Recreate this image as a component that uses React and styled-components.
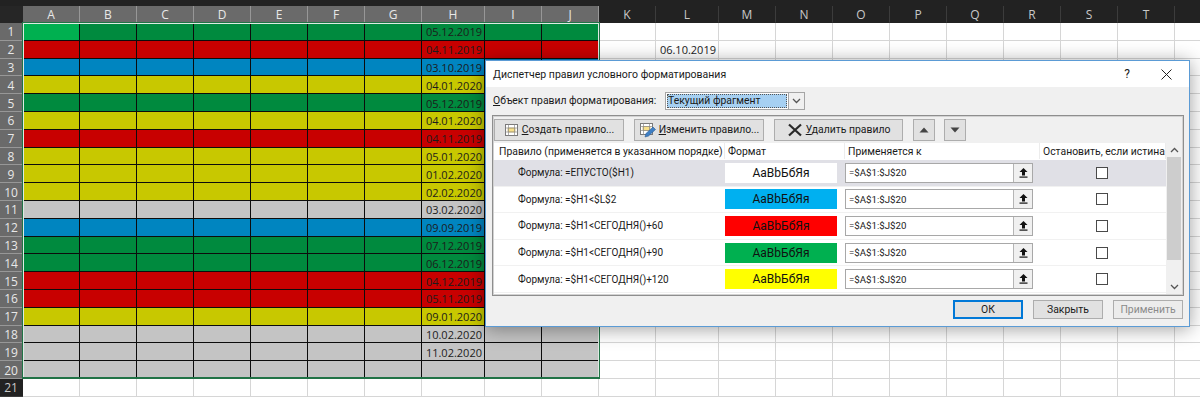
import React from 'react';
import styled, { createGlobalStyle } from 'styled-components';

const COLORS = {
  green: '#008a3e',
  red: '#c80000',
  blue: '#0085c0',
  yellow: '#c8c800',
  gray: '#c4c4c4',
};

const COLUMNS = 'ABCDEFGHIJKLMNOPQRSTU'.split('');
const LABELS = 'ABCDEFGHIJKLMNOPQRST'.split('');

const SHEET_ROWS = [
  ['green', '05.12.2019'],
  ['red', '04.11.2019'],
  ['blue', '03.10.2019'],
  ['yellow', '04.01.2020'],
  ['green', '05.12.2019'],
  ['yellow', '04.01.2020'],
  ['red', '04.11.2019'],
  ['yellow', '05.01.2020'],
  ['yellow', '01.02.2020'],
  ['yellow', '02.02.2020'],
  ['gray', '03.02.2020'],
  ['blue', '09.09.2019'],
  ['green', '07.12.2019'],
  ['green', '06.12.2019'],
  ['red', '04.12.2019'],
  ['red', '05.11.2019'],
  ['yellow', '09.01.2020'],
  ['gray', '10.02.2020'],
  ['gray', '11.02.2020'],
  ['gray', ''],
];

const RULES = [
  { formula: 'Формула: =ЕПУСТО($H1)', swatch: '#ffffff', active: true },
  { formula: 'Формула: =$H1<$L$2', swatch: '#00b0f0' },
  { formula: 'Формула: =$H1<СЕГОДНЯ()+60', swatch: '#ff0000' },
  { formula: 'Формула: =$H1<СЕГОДНЯ()+90', swatch: '#00b050' },
  { formula: 'Формула: =$H1<СЕГОДНЯ()+120', swatch: '#ffff00' },
];

const GlobalStyle = createGlobalStyle`
  html, body {
    margin: 0;
    padding: 0;
    background: #fff;
    overflow: hidden;
  }

  * {
    box-sizing: border-box;
  }
`;

const Page = styled.div`
  position: relative;
  width: 1200px;
  height: 402px;
  overflow: hidden;
  background: #fff;
  font-family: 'Open Sans', 'Noto Sans', sans-serif;
`;

const TopStrip = styled.div`
  height: 6px;
  background: #222;
`;

const Sheet = styled.div`
  position: relative;
  display: grid;
  grid-template-columns: 23px repeat(7, 57px) 63px repeat(3, 57px) 63px repeat(9, 57px);
  grid-template-rows: 17px repeat(21, 17.8px);
`;

const Corner = styled.div`
  position: relative;
  background: #262626;

  ::after {
    content: '';
    position: absolute;
    right: 3px;
    bottom: 3px;
    border-style: solid;
    border-width: 0 0 11px 11px;
    border-color: transparent transparent #5c5c5c transparent;
  }
`;

const ColumnHeader = styled.div`
  display: flex;
  align-items: center;
  justify-content: center;
  font-size: 12px;
  color: ${(p) => (p.$selected ? '#e8e8e8' : '#c8c8c8')};
  background: ${(p) => (p.$selected ? '#6a6a6a' : '#222')};
  border-right: 1px solid ${(p) => (p.$selected ? '#979797' : '#3c3c3c')};
  border-bottom: 1px solid ${(p) => (p.$selected ? '#217346' : '#222')};
`;

const RowHeader = styled.div`
  display: flex;
  align-items: center;
  justify-content: center;
  padding: 1px 1px 0 0;
  font-size: 12px;
  color: ${(p) => (p.$selected ? '#e8e8e8' : '#c8c8c8')};
  background: ${(p) => (p.$selected ? '#6a6a6a' : '#222')};
  border-bottom: 1px solid ${(p) => (p.$selected ? '#979797' : '#3c3c3c')};
`;

const Cell = styled.div`
  display: flex;
  align-items: center;
  justify-content: flex-end;
  padding: 1px 2px 0 0;
  font-size: 11px;
  color: #1c1c1c;
  background: ${(p) => p.$fill || '#fff'};
  border-right: 1px solid ${(p) => (p.$fill ? '#0c0c0c' : '#d6d6d6')};
  border-bottom: 1px solid ${(p) => (p.$fill ? '#0c0c0c' : '#d6d6d6')};
`;

const ActiveCell = styled.div`
  position: absolute;
  left: 23px;
  top: 17px;
  width: 57px;
  height: 18px;
  background: #00b050;
  border-right: 1px solid #0c0c0c;
  border-bottom: 1px solid #0c0c0c;
`;

const Selection = styled.div`
  position: absolute;
  left: 22px;
  top: 16px;
  width: 578px;
  height: 357px;
  border-style: solid;
  border-color: #217346;
  border-width: 1px 1px 2px 1px;
  box-shadow: inset 0 1px 0 #dfe9e3, inset -1px 0 0 #dfe9e3, inset 1px 0 0 #dfe9e3;
  pointer-events: none;

  ::after {
    content: '';
    position: absolute;
    right: -3px;
    bottom: -4px;
    width: 5px;
    height: 5px;
    background: #217346;
  }
`;

const Dialog = styled.div`
  position: absolute;
  left: 485px;
  top: 60px;
  width: 705px;
  height: 267px;
  display: flex;
  flex-direction: column;
  color: #1a1a1a;
  background: #f0f0f0;
  border: 1px solid #5b9bd5;
  box-shadow: 0 2px 18px rgba(0, 0, 0, 0.38);
  font-family: Roboto, 'Open Sans', sans-serif;
  font-size: 10.4px;
`;

const TitleBar = styled.div`
  flex: none;
  height: 26px;
  display: flex;
  align-items: center;
  justify-content: space-between;
  padding: 0 17px 0 7px;
  background: #fff;
`;

const Title = styled.div`
  font-size: 10.5px;
`;

const WindowActions = styled.div`
  display: flex;
  align-items: center;
  gap: 31px;
`;

const HelpMark = styled.span`
  font-size: 12px;
`;

const TargetRow = styled.div`
  flex: none;
  height: 28px;
  display: flex;
  align-items: center;
  padding: 0 0 1px 7px;
`;

const TargetLabel = styled.label`
  flex: none;
  width: 172px;
  white-space: nowrap;
`;

const Combo = styled.div`
  display: flex;
  width: 140px;
  height: 18px;
  background: #fff;
  border: 1px solid #a5a5a5;
`;

const ComboValue = styled.div`
  flex: 1;
  display: flex;
  align-items: center;
  margin: 1px;
  padding-left: 1px;
  background: #a6d0f2;
  outline: 1px dotted #555;
  outline-offset: -1px;
`;

const ComboArrow = styled.div`
  flex: none;
  width: 16px;
  display: flex;
  align-items: center;
  justify-content: center;
  background: #f0f0f0;
  border-left: 1px solid #a5a5a5;
`;

const Frame = styled.div`
  flex: none;
  height: 181px;
  margin: 0 5px 0 6px;
  display: flex;
  flex-direction: column;
  border: 1px solid #8e8e8e;
  outline: 1px solid #d2d2d2;
  outline-offset: -2px;
`;

const Toolbar = styled.div`
  flex: none;
  height: 26px;
  display: flex;
  align-items: center;
  padding: 1px 0 0 1px;
`;

const ToolButton = styled.button`
  flex: none;
  width: ${(p) => p.$width || 130}px;
  height: 22px;
  margin-right: ${(p) => p.$gap || 10}px;
  padding: 0;
  display: flex;
  align-items: center;
  justify-content: center;
  gap: 3px;
  font: inherit;
  color: inherit;
  white-space: nowrap;
  background: #e1e1e1;
  border: 1px solid #adadad;
`;

const Hotkey = styled.span`
  text-decoration: underline;
`;

const RuleList = styled.div`
  flex: 1;
  min-height: 0;
  display: flex;
  margin: 1px;
  background: #fff;
`;

const RuleColumns = styled.div`
  flex: 1;
  min-width: 0;
`;

const RuleHeader = styled.div`
  height: 17px;
  display: grid;
  grid-template-columns: 231px 120px 195px 1fr;
  align-items: center;
  padding-bottom: 1px;
`;

const HeaderCell = styled.div`
  height: 100%;
  display: flex;
  align-items: center;
  padding-left: ${(p) => p.$pad || 3}px;
  white-space: nowrap;
  border-right: 1px solid #ececec;
`;

const RuleRow = styled.div`
  height: 26.6px;
  display: grid;
  grid-template-columns: 231px 120px 195px 1fr;
  align-items: center;
  background: ${(p) => (p.$active ? '#e0e0e6' : '#fff')};
  border-bottom: 1px solid #f1f1f1;
`;

const Formula = styled.div`
  padding-left: 24px;
  font-size: 10px;
  white-space: nowrap;
`;

const Swatch = styled.div`
  width: 112px;
  height: 20px;
  display: flex;
  align-items: center;
  justify-content: center;
  color: #111;
  font-size: 12px;
  background: ${(p) => p.$color};
`;

const RangeInput = styled.div`
  width: 188px;
  height: 20px;
  display: flex;
  align-items: stretch;
  background: #fff;
  border: 1px solid #a8a8a8;
`;

const RangeText = styled.div`
  flex: 1;
  display: flex;
  align-items: center;
  padding-left: 3px;
  font-size: 9.7px;
`;

const RangeButton = styled.div`
  flex: none;
  width: 19px;
  display: flex;
  align-items: center;
  justify-content: center;
  background: #f0f0f0;
  border-left: 1px solid #b5b5b5;
`;

const CheckBox = styled.div`
  justify-self: center;
  width: 12px;
  height: 12px;
  margin-right: 2px;
  background: #fff;
  border: 1px solid #4a4a4a;
`;

const Scrollbar = styled.div`
  flex: none;
  width: 16px;
  display: flex;
  flex-direction: column;
  background: #f0f0f0;
`;

const ScrollArrow = styled.div`
  flex: none;
  height: 14px;
  display: flex;
  align-items: center;
  justify-content: center;
`;

const ScrollThumb = styled.div`
  flex: none;
  height: 103px;
  margin: 0 1px;
  background: #cdcdcd;
`;

const ScrollTrack = styled.div`
  flex: 1;
`;

const Footer = styled.div`
  flex: 1;
  display: flex;
  align-items: center;
  justify-content: flex-end;
  gap: 10px;
  padding: 0 6px 3px 0;
`;

const DialogButton = styled.button`
  width: 70px;
  height: 19px;
  padding: 0;
  font: inherit;
  color: ${(p) => (p.disabled ? '#8a8a8a' : 'inherit')};
  background: ${(p) => (p.disabled ? '#ececec' : '#e1e1e1')};
  border: ${(p) => (p.$primary ? '2px solid #0078d7' : '1px solid #adadad')};
`;

const NewRuleIcon = () => (
  <svg width="15" height="14" viewBox="0 0 15 14">
    <rect x="1.5" y="1.5" width="12" height="11" fill="#fff" stroke="#7a7a7a" />
    <rect x="4" y="5" width="7" height="4" fill="#f7e08a" stroke="#c9a23a" strokeWidth="0.6" />
    <path d="M1.5 5H13.5M1.5 9H13.5M4.5 1.5V12.5M10.5 1.5V12.5" stroke="#8c8c8c" strokeWidth="0.7" fill="none" />
  </svg>
);

const EditRuleIcon = () => (
  <svg width="17" height="16" viewBox="0 0 17 16">
    <rect x="1.5" y="1.5" width="12" height="11" fill="#fff" stroke="#7a7a7a" />
    <rect x="4" y="4.5" width="7" height="4" fill="#f7e08a" stroke="#c9a23a" strokeWidth="0.6" />
    <path d="M1.5 4.5H13.5M1.5 8.5H13.5M4.5 1.5V12.5M10.5 1.5V12.5" stroke="#8c8c8c" strokeWidth="0.7" fill="none" />
    <path d="M6 15l1-3.5 7-6.5 2.5 2.5-7 6.5z" fill="#3f7fc4" stroke="#2a5c96" strokeWidth="0.6" />
  </svg>
);

const DeleteIcon = () => (
  <svg width="16" height="14" viewBox="0 0 16 14">
    <path d="M2 1.5L14 12.5M14 1.5L2 12.5" stroke="#2a2a2a" strokeWidth="2.2" fill="none" />
  </svg>
);

const Triangle = ({ down }) => (
  <svg width="10" height="6" viewBox="0 0 10 6">
    <path d={down ? 'M0.5 0.5H9.5L5 5.5z' : 'M0.5 5.5H9.5L5 0.5z'} fill="#444" />
  </svg>
);

const Chevron = ({ up, color = '#555' }) => (
  <svg width="9" height="6" viewBox="0 0 9 6">
    <path d={up ? 'M1 5L4.5 1.5L8 5' : 'M1 1L4.5 4.5L8 1'} stroke={color} strokeWidth="1.3" fill="none" />
  </svg>
);

const CloseIcon = () => (
  <svg width="11" height="11" viewBox="0 0 11 11">
    <path d="M0.5 0.5L10.5 10.5M10.5 0.5L0.5 10.5" stroke="#222" strokeWidth="1" fill="none" />
  </svg>
);

const CollapseIcon = () => (
  <svg width="9" height="10" viewBox="0 0 9 10">
    <path d="M4.5 0L8.5 4H6V7.5H3V4H0.5z" fill="#111" />
    <rect x="0.5" y="8.5" width="8" height="1.2" fill="#111" />
  </svg>
);

function SheetGrid() {
  return (
    <Sheet>
      <Corner />
      {COLUMNS.map((col, i) => (
        <ColumnHeader key={col} $selected={i < 10}>
          {LABELS[i]}
        </ColumnHeader>
      ))}

      {SHEET_ROWS.map(([color, date], r) => (
        <React.Fragment key={r}>
          <RowHeader $selected>{r + 1}</RowHeader>
          {COLUMNS.map((col, c) => {
            let text = '';
            if (col === 'H') text = date;
            if (col === 'L' && r === 1) text = '06.10.2019';
            return (
              <Cell key={col} $fill={c < 10 ? COLORS[color] : null}>
                {text}
              </Cell>
            );
          })}
        </React.Fragment>
      ))}

      <RowHeader>21</RowHeader>
      {COLUMNS.map((col) => (
        <Cell key={col} />
      ))}

      <ActiveCell />
      <Selection />
    </Sheet>
  );
}

function RulesDialog() {
  return (
    <Dialog>
      <TitleBar>
        <Title>Диспетчер правил условного форматирования</Title>
        <WindowActions>
          <HelpMark>?</HelpMark>
          <CloseIcon />
        </WindowActions>
      </TitleBar>

      <TargetRow>
        <TargetLabel>
          <Hotkey>О</Hotkey>бъект правил форматирования:
        </TargetLabel>
        <Combo>
          <ComboValue>Текущий фрагмент</ComboValue>
          <ComboArrow>
            <Chevron />
          </ComboArrow>
        </Combo>
      </TargetRow>

      <Frame>
        <Toolbar>
          <ToolButton>
            <NewRuleIcon />
            <span>
              <Hotkey>С</Hotkey>оздать правило...
            </span>
          </ToolButton>
          <ToolButton>
            <EditRuleIcon />
            <span>
              <Hotkey>И</Hotkey>зменить правило...
            </span>
          </ToolButton>
          <ToolButton $width={129}>
            <DeleteIcon />
            <span>
              <Hotkey>У</Hotkey>далить правило
            </span>
          </ToolButton>
          <ToolButton $width={22} $gap={9}>
            <Triangle />
          </ToolButton>
          <ToolButton $width={22}>
            <Triangle down />
          </ToolButton>
        </Toolbar>

        <RuleList>
          <RuleColumns>
            <RuleHeader>
              <HeaderCell $pad={5}>Правило (применяется в указанном порядке)</HeaderCell>
              <HeaderCell>Формат</HeaderCell>
              <HeaderCell>Применяется к</HeaderCell>
              <HeaderCell>Остановить, если истина</HeaderCell>
            </RuleHeader>
            {RULES.map((rule) => (
              <RuleRow key={rule.formula} $active={rule.active}>
                <Formula>{rule.formula}</Formula>
                <Swatch $color={rule.swatch}>АаВbБбЯя</Swatch>
                <RangeInput>
                  <RangeText>=$A$1:$J$20</RangeText>
                  <RangeButton>
                    <CollapseIcon />
                  </RangeButton>
                </RangeInput>
                <CheckBox />
              </RuleRow>
            ))}
          </RuleColumns>
          <Scrollbar>
            <ScrollArrow>
              <Chevron up />
            </ScrollArrow>
            <ScrollThumb />
            <ScrollTrack />
            <ScrollArrow>
              <Chevron />
            </ScrollArrow>
          </Scrollbar>
        </RuleList>
      </Frame>

      <Footer>
        <DialogButton $primary>ОК</DialogButton>
        <DialogButton>Закрыть</DialogButton>
        <DialogButton disabled>Применить</DialogButton>
      </Footer>
    </Dialog>
  );
}

export default function App() {
  return (
    <Page>
      <GlobalStyle />
      <TopStrip />
      <SheetGrid />
      <RulesDialog />
    </Page>
  );
}
